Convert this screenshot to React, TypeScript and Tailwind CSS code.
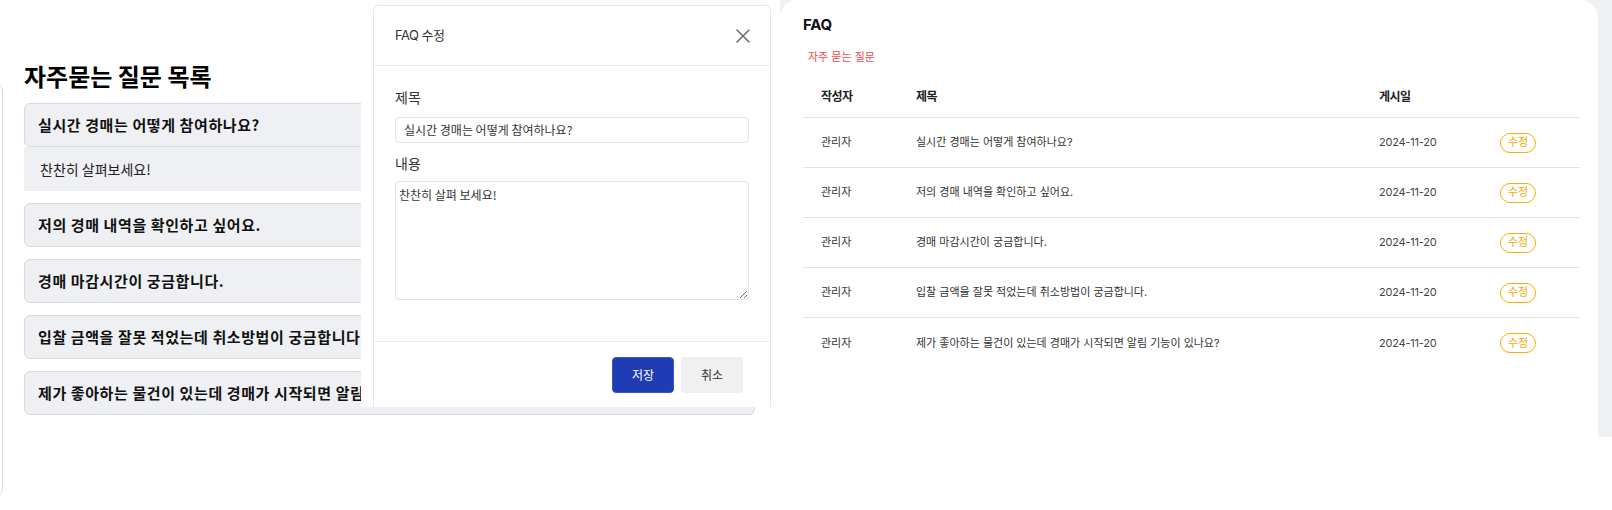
import React from 'react';

const questions = [
  '실시간 경매는 어떻게 참여하나요?',
  '저의 경매 내역을 확인하고 싶어요.',
  '경매 마감시간이 궁금합니다.',
  '입찰 금액을 잘못 적었는데 취소방법이 궁금합니다.',
  '제가 좋아하는 물건이 있는데 경매가 시작되면 알림 기능이 있나요?',
];

function CloseIcon() {
  return (
    <svg width="14" height="14" viewBox="0 0 14 14" fill="none">
      <path d="M1 1L13 13M13 1L1 13" stroke="#6b6b6b" strokeWidth="1.5" strokeLinecap="round" />
    </svg>
  );
}

function FaqAccordion() {
  return (
    <div className="relative w-[780px] h-full flex shrink-0 overflow-hidden font-['Noto_Sans_CJK_KR',sans-serif]">
      {/* edge of the previous card */}
      <div className="mt-[80px] h-[420px] w-[14px] -ml-[11px] shrink-0 border border-[#dcdcdc] rounded-r-[12px]" />

      <div className="ml-[21px] w-[731px] pt-[60px] flex flex-col">
        <h2 className="text-[24px] leading-[32px] font-bold text-black mb-[11px]">
          자주묻는 질문 목록
        </h2>
        <div className="flex flex-col gap-[12px]">
          {questions.map((q, i) => (
            <div key={q}>
              <div className="h-[44px] flex items-center px-[13px] bg-[#eef0f4] border border-[#d8dadf] rounded-[6px]">
                <span className="text-[15px] font-bold tracking-[0.04em] text-[#111] whitespace-nowrap">{q}</span>
              </div>
              {i === 0 && (
                <div className="h-[44px] flex items-center pl-[16px] bg-[#eff0f3]">
                  <span className="text-[14px] text-[#222]">찬찬히 살펴보세요!</span>
                </div>
              )}
            </div>
          ))}
        </div>
      </div>

      {/* edit modal */}
      <div className="absolute left-[361px] top-0 w-[412px] h-[407px] bg-white overflow-hidden">
        <div className="ml-[12px] mt-[5px] w-[398px] h-[420px] border border-[#e6e6e6] rounded-[6px] flex flex-col">
          <div className="h-[60px] shrink-0 flex items-center justify-between pl-[21px] pr-[20px] border-b border-[#ececec]">
            <span className="text-[13px] tracking-[-0.04em] text-[#333] font-['Inter','Noto_Sans_CJK_KR',sans-serif]">FAQ 수정</span>
            <CloseIcon />
          </div>
          <div className="px-[21px] pt-[21px] pb-[41px] flex flex-col">
            <label className="text-[14px] leading-[20px] text-[#333] mb-[10px]">제목</label>
            <div className="h-[26px] flex items-center pl-[8px] border border-[#e3e3e3] rounded-[4px]">
              <span className="text-[12px] text-[#333]">실시간 경매는 어떻게 참여하나요?</span>
            </div>
            <label className="mt-[10px] text-[14px] leading-[20px] text-[#333] mb-[8px]">내용</label>
            <textarea
              className="h-[119px] resize-y border border-[#e3e3e3] rounded-[4px] pl-[3px] pt-[4px] text-[12px] text-[#333] outline-none"
              defaultValue="찬찬히 살펴 보세요!"
            />
          </div>
          <div className="border-t border-[#ececec] pt-[15px] pr-[27px] flex justify-end gap-[7px]">
            <button className="w-[62px] h-[36px] rounded-[4px] bg-[#1f3cb4] border border-[#3d57c2] text-white text-[12px]">
              저장
            </button>
            <button className="w-[62px] h-[36px] rounded-[4px] bg-[#f0f0f1] text-[#333] text-[12px]">
              취소
            </button>
          </div>
        </div>
      </div>
    </div>
  );
}

function FaqTable() {
  return (
    <div className="w-[832px] h-[437px] shrink-0 bg-[#f0f1f3] flex font-['Inter','Noto_Sans_CJK_KR',sans-serif]">
      <div className="w-[818px] h-full bg-white rounded-t-[18px] pl-[23px] pr-[18px] pt-[15px] flex flex-col">
        <h3 className="text-[15px] leading-[20px] font-bold tracking-[-0.02em] text-[#111]">FAQ</h3>
        <p className="mt-[14px] ml-[5px] text-[11px] leading-[16px] text-[#f5484a]">자주 묻는 질문</p>

        <div className="mt-[12px] grid grid-cols-[95px_463px_121px_98px] h-[41px] items-center border-b border-[#e2e3e6] text-[12px] font-semibold tracking-[-0.04em] text-[#222]">
          <span className="pl-[18px]">작성자</span>
          <span className="pl-[18px]">제목</span>
          <span className="pl-[18px]">게시일</span>
          <span />
        </div>
        {questions.map((q, i) => (
          <div
            key={q}
            className={`grid grid-cols-[95px_463px_121px_98px] h-[50px] items-center text-[11px] text-[#333] ${
              i < questions.length - 1 ? 'border-b border-[#e2e3e6]' : ''
            }`}
          >
            <span className="pl-[18px]">관리자</span>
            <span className="pl-[18px] whitespace-nowrap">{q}</span>
            <span className="pl-[18px] text-[#444] tracking-[-0.02em]">2024-11-20</span>
            <span className="pl-[18px]">
              <button className="w-[36px] h-[20px] rounded-full border border-[#f5b000] text-[#f5a300] text-[11px] leading-none">
                수정
              </button>
            </span>
          </div>
        ))}
      </div>
    </div>
  );
}

export default function App() {
  return (
    <div className="w-[1612px] h-[510px] bg-white flex overflow-hidden">
      <FaqAccordion />
      <FaqTable />
    </div>
  );
}
